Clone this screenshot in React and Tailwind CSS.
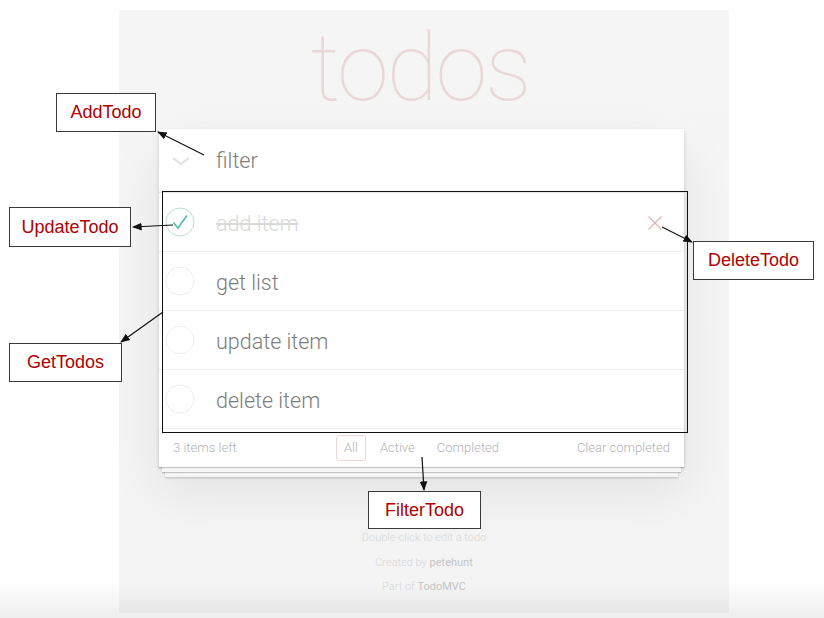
import React from 'react'

const todos = [
  { id: 1, title: 'add item', done: true },
  { id: 2, title: 'get list', done: false },
  { id: 3, title: 'update item', done: false },
  { id: 4, title: 'delete item', done: false },
]

const notes = [
  { label: 'AddTodo', cls: 'left-[56px] top-[93px] w-[100px] h-[39px]' },
  { label: 'UpdateTodo', cls: 'left-[9px] top-[207px] w-[122px] h-[40px]' },
  { label: 'DeleteTodo', cls: 'left-[693px] top-[241px] w-[121px] h-[39px]' },
  { label: 'GetTodos', cls: 'left-[9px] top-[343px] w-[113px] h-[39px]' },
  { label: 'FilterTodo', cls: 'left-[368px] top-[491px] w-[113px] h-[38px]' },
]

// [x1, y1, x2, y2] – head at x2,y2
const arrows = [
  [204, 155, 158, 132],
  [173, 225, 133, 227],
  [662, 227, 692, 242],
  [163, 312, 121, 342],
  [422, 457, 424, 490],
]

function Toggle({ done }) {
  return (
    <svg width="30" height="30" viewBox="0 0 30 30" className="shrink-0">
      <circle cx="15" cy="15" r="14" fill="none" stroke={done ? '#bddad5' : '#ededed'} strokeWidth="1" />
      {done && <path d="M8.5 15.5 L13 21 L22 8.5" fill="none" stroke="#5dc2af" strokeWidth="1.8" />}
    </svg>
  )
}

export default function App() {
  return (
    <div className="relative w-[824px] h-[618px] overflow-hidden pt-[10px] pl-[119px] bg-[linear-gradient(to_bottom,#ffffff_0,#ffffff_580px,#f1f1f1_612px,#efefef_618px)] font-['Roboto',sans-serif]">
      <div className="w-[610px] h-[603px] flex flex-col bg-[linear-gradient(to_bottom,#f5f5f5_0,#f4f4f4_575px,#e7e7e7_603px)]">
        <h1 className="mt-[11px] h-[108px] text-center text-[94px] leading-none font-thin tracking-[-0.025em] text-[rgba(175,47,47,0.15)] pr-[8px]">
          todos
        </h1>

        {/* main card */}
        <div className="ml-[40px] w-[525px] bg-white shadow-[0_2px_4px_rgba(0,0,0,0.15),0_25px_50px_rgba(0,0,0,0.08)]">
          <div className="h-[63px] flex items-center shadow-[inset_0_-2px_1px_rgba(0,0,0,0.03)]">
            <div className="w-[57px] flex justify-center pr-[13px]">
              <svg width="20" height="12" viewBox="0 0 20 12">
                <path d="M2 3 L10 9 L18 3" fill="none" stroke="#e6e6e6" strokeWidth="2.5" />
              </svg>
            </div>
            <span className="pt-[2px] text-[21.5px] font-light text-[#7d7d7d]">filter</span>
          </div>

          <ul className="border-t border-[#e6e6e6]">
            {todos.map(t => (
              <li key={t.id} className="h-[59px] flex items-center border-b border-[#ededed] pl-[6px]">
                <Toggle done={t.done} />
                <span className={t.done
                  ? 'ml-[21px] pt-[4px] flex-1 text-[21.5px] font-light text-[#d9d9d9] line-through'
                  : 'ml-[21px] pt-[4px] flex-1 text-[21.5px] font-light text-[#7d7d7d]'}>
                  {t.title}
                </span>
                {t.done && (
                  <svg width="16" height="16" viewBox="0 0 16 16" className="mr-[21px] mt-[2px]">
                    <path d="M1.5 1.5 L14.5 14.5 M14.5 1.5 L1.5 14.5" stroke="#e0b4b4" strokeWidth="1.3" />
                  </svg>
                )}
              </li>
            ))}
          </ul>

          <footer className="h-[38px] px-[14px] grid grid-cols-[1fr_auto_1fr] items-center text-[13px] font-light text-[#b3b3b3] shadow-[0_1px_1px_rgba(0,0,0,0.2),0_8px_0_-3px_#f6f6f6,0_9px_1px_-3px_rgba(0,0,0,0.2),0_16px_0_-6px_#f6f6f6,0_17px_2px_-6px_rgba(0,0,0,0.2)]">
            <span>3 items left</span>
            <div className="flex gap-[6px]">
              <span className="px-[7px] py-[2px] rounded-[3px] border border-[rgba(175,47,47,0.2)]">All</span>
              <span className="px-[7px] py-[2px] border border-transparent">Active</span>
              <span className="px-[7px] py-[2px] border border-transparent">Completed</span>
            </div>
            <span className="justify-self-end">Clear completed</span>
          </footer>
        </div>

        <div className="mt-[59px] text-center text-[11px] leading-[24.5px] font-light text-[#d6d6d6]">
          <p>Double-click to edit a todo</p>
          <p>Created by <span className="font-normal text-[#c4c4c4]">petehunt</span></p>
          <p>Part of <span className="font-normal text-[#c4c4c4]">TodoMVC</span></p>
        </div>
      </div>

      {/* annotation frame around the list */}
      <div className="absolute left-[162px] top-[191px] w-[526px] h-[242px] border-[1.5px] border-[#111]" />

      {notes.map(n => (
        <div key={n.label}
          className={'absolute flex items-center justify-center bg-white border-[1.5px] border-[#3a3a3a] font-[Liberation_Sans,Arial,sans-serif] text-[18px] text-[#b00000] ' + n.cls}>
          {n.label}
        </div>
      ))}

      <svg className="absolute left-0 top-0 pointer-events-none" width="824" height="618">
        <defs>
          <marker id="head" viewBox="0 0 10 10" refX="9" refY="5" markerWidth="8" markerHeight="8" orient="auto-start-reverse">
            <path d="M0 1 L10 5 L0 9 z" fill="#111" />
          </marker>
        </defs>
        {arrows.map(([x1, y1, x2, y2], i) => (
          <line key={i} x1={x1} y1={y1} x2={x2} y2={y2} stroke="#111" strokeWidth="1.2" markerEnd="url(#head)" />
        ))}
      </svg>
    </div>
  )
}
